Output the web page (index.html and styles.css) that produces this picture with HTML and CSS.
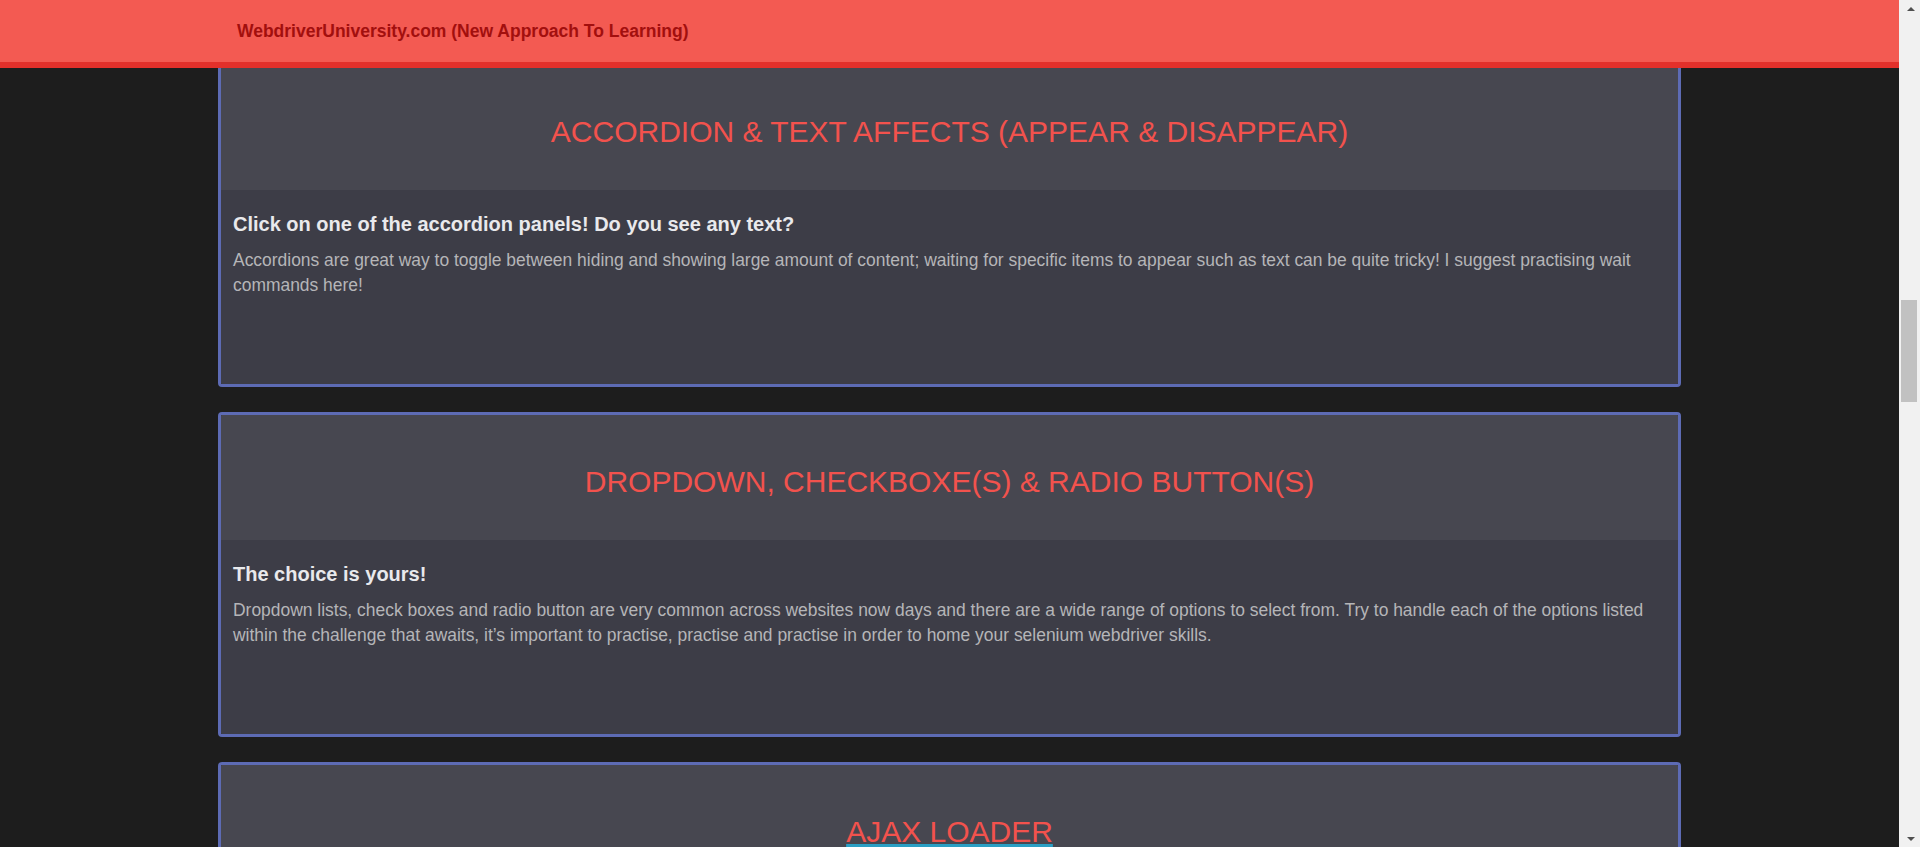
FILE: index.html
```html
<!DOCTYPE html>
<html lang="en">
<head>
<meta charset="utf-8">
<title>WebdriverUniversity.com</title>
<link rel="stylesheet" href="styles.css">
</head>
<body>
<div class="page">
  <div class="main">
    <header class="navbar">
      <span class="brand">WebdriverUniversity.com (New Approach To Learning)</span>
    </header>
    <div class="content">
      <section class="card">
        <div class="card-head">
          <h2 class="card-title">ACCORDION &amp; TEXT AFFECTS (APPEAR &amp; DISAPPEAR)</h2>
        </div>
        <div class="card-body">
          <h4 class="card-sub">Click on one of the accordion panels! Do you see any text?</h4>
          <p class="card-text">Accordions are great way to toggle between hiding and showing large amount of content; waiting for specific items to appear such as text can be quite tricky! I suggest practising wait commands here!</p>
        </div>
      </section>
      <section class="card">
        <div class="card-head">
          <h2 class="card-title">DROPDOWN, CHECKBOXE(S) &amp; RADIO BUTTON(S)</h2>
        </div>
        <div class="card-body">
          <h4 class="card-sub">The choice is yours!</h4>
          <p class="card-text">Dropdown lists, check boxes and radio button are very common across websites now days and there are a wide range of options to select from. Try to handle each of the options listed within the challenge that awaits, it’s important to practise, practise and practise in order to home your selenium webdriver skills.</p>
        </div>
      </section>
      <section class="card">
        <div class="card-head">
          <h2 class="card-title"><span class="title-link">AJAX LOADER</span></h2>
        </div>
        <div class="card-body"></div>
      </section>
    </div>
  </div>
  <div class="scrollbar">
    <div class="sb-btn"><span class="arrow-up"></span></div>
    <div class="sb-track"><div class="sb-thumb"></div></div>
    <div class="sb-btn"><span class="arrow-down"></span></div>
  </div>
</div>
</body>
</html>
```
FILE: styles.css
```css
html, body {
  margin: 0;
  padding: 0;
  height: 847px;
  overflow: hidden;
  background: #1d1d1d;
  font-family: "Liberation Sans", Arial, sans-serif;
}

.page {
  display: flex;
  height: 847px;
}

.main {
  position: relative;
  width: 1899px;
  flex: 0 0 1899px;
  height: 847px;
  overflow: hidden;
}

.navbar {
  position: absolute;
  top: 0;
  left: 0;
  right: 0;
  z-index: 5;
  height: 62px;
  background: #f35a52;
  border-bottom: 6px solid #e3302b;
  display: flex;
  align-items: center;
  padding-left: 237px;
}

.brand {
  color: #a20f0e;
  font-weight: bold;
  font-size: 17.5px;
  line-height: 20px;
}

.content {
  padding-top: 62px;
  display: flex;
  flex-direction: column;
  gap: 25px;
}

.card {
  margin-left: 218px;
  width: 1463px;
  box-sizing: border-box;
  border: 3px solid #5d6bb4;
  border-radius: 4px;
  overflow: hidden;
  flex: 0 0 auto;
}

.card-head {
  height: 125px;
  box-sizing: border-box;
  background: #474750;
  padding-top: 50px;
  text-align: center;
}

.card-title {
  margin: 0;
  font-weight: normal;
  font-size: 30px;
  line-height: 33px;
  color: #f2524d;
}

.title-link {
  text-decoration: underline;
  text-decoration-color: #2a9fc4;
  text-decoration-thickness: 5px;
  text-underline-offset: 2px;
  text-decoration-skip-ink: none;
}

.card-body {
  height: 194px;
  box-sizing: border-box;
  background: #3d3d47;
  padding: 13px 12px 0 12px;
}

.card-sub {
  margin: 10px 0 13px 0;
  font-size: 20px;
  font-weight: bold;
  line-height: 22px;
  color: #e9e9ec;
}

.card-text {
  margin: 0;
  font-size: 17.45px;
  line-height: 24.5px;
  color: #b5b5b8;
}

.scrollbar {
  width: 21px;
  flex: 0 0 21px;
  height: 847px;
  background: #f1f1f1;
  display: flex;
  flex-direction: column;
}

.sb-btn {
  height: 17px;
  display: flex;
  align-items: center;
  justify-content: center;
  padding-left: 2px;
}

.arrow-up {
  width: 0;
  height: 0;
  border-left: 4px solid transparent;
  border-right: 4px solid transparent;
  border-bottom: 4px solid #505050;
}

.arrow-down {
  width: 0;
  height: 0;
  border-left: 4px solid transparent;
  border-right: 4px solid transparent;
  border-top: 4px solid #505050;
}

.sb-track {
  flex: 1 1 auto;
  padding: 283px 3px 0 2px;
}

.sb-thumb {
  height: 102px;
  background: #c1c1c1;
}
```
